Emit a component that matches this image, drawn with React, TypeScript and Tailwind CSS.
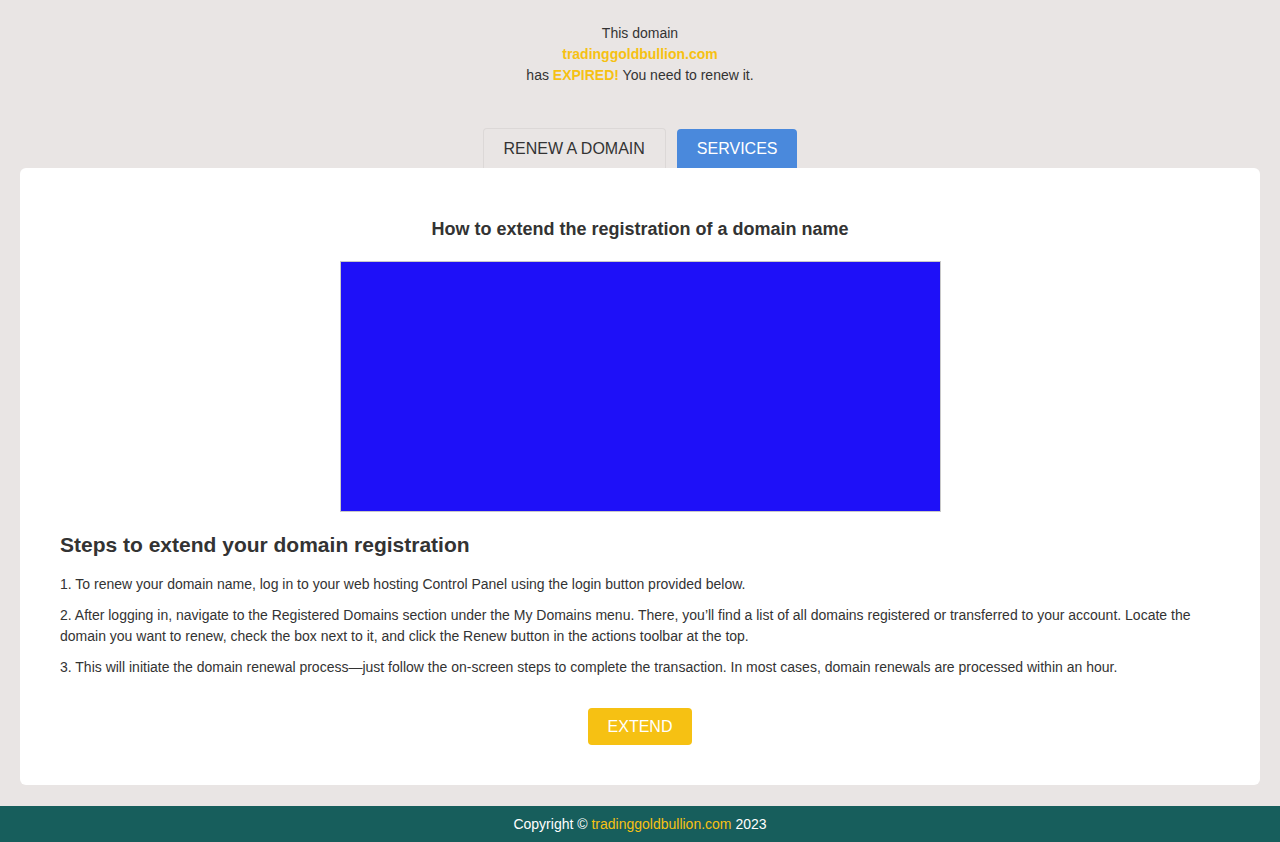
const steps = [
  "1. To renew your domain name, log in to your web hosting Control Panel using the login button provided below.",
  "2. After logging in, navigate to the Registered Domains section under the My Domains menu. There, you\u2019ll find a list of all domains registered or transferred to your account. Locate the domain you want to renew, check the box next to it, and click the Renew button in the actions toolbar at the top.",
  "3. This will initiate the domain renewal process\u2014just follow the on-screen steps to complete the transaction. In most cases, domain renewals are processed within an hour.",
];

export default function App() {
  return (
    <div className="min-h-screen bg-[#e9e5e4] text-[#333] font-['Liberation_Sans',Arial,sans-serif] flex flex-col">
      {/* notice */}
      <div className="pt-[23px] text-center text-[14px] leading-[21px]">
        <p>This domain</p>
        <p className="font-bold text-[#f6c113]">tradinggoldbullion.com</p>
        <p>
          has <span className="font-bold text-[#f6c113]">EXPIRED!</span> You need to renew it.
        </p>
      </div>

      {/* tabs */}
      <div className="mt-[42px] flex justify-center gap-[11px]">
        <button className="h-[40px] px-[20px] border border-b-0 border-[#dcd8d7] rounded-t-[4px] text-[16px] text-[#333] bg-[#e9e5e4]">
          RENEW A DOMAIN
        </button>
        <button className="h-[39px] mt-[1px] px-[20px] rounded-t-[4px] text-[16px] text-white bg-[#4a89dc]">
          SERVICES
        </button>
      </div>

      {/* card */}
      <div className="mx-[20px] bg-white rounded-[6px] px-[40px] pt-[51px] pb-[40px]">
        <h3 className="text-center text-[18px] leading-[21px] font-bold">
          How to extend the registration of a domain name
        </h3>
        <div className="mx-auto mt-[21px] w-[601px] h-[251px] border border-[#c8c8c8] bg-[#1e10f8]" />

        <h2 className="mt-[21px] text-[21px] leading-[24px] font-bold">
          Steps to extend your domain registration
        </h2>
        <div className="mt-[17px] text-[14px] leading-[21px]">
          {steps.map((s) => (
            <p key={s} className="mb-[10px] last:mb-0">
              {s}
            </p>
          ))}
        </div>

        <div className="mt-[30px] flex justify-center">
          <button className="w-[104px] h-[37px] rounded-[4px] bg-[#f6c113] text-white text-[16px]">
            EXTEND
          </button>
        </div>
      </div>

      {/* footer */}
      <footer className="mt-[21px] h-[36px] bg-[#175e5c] text-white text-[14px] flex items-center justify-center">
        Copyright ©&nbsp;<span className="text-[#f6c113]">tradinggoldbullion.com</span>&nbsp;2023
      </footer>
    </div>
  );
}
